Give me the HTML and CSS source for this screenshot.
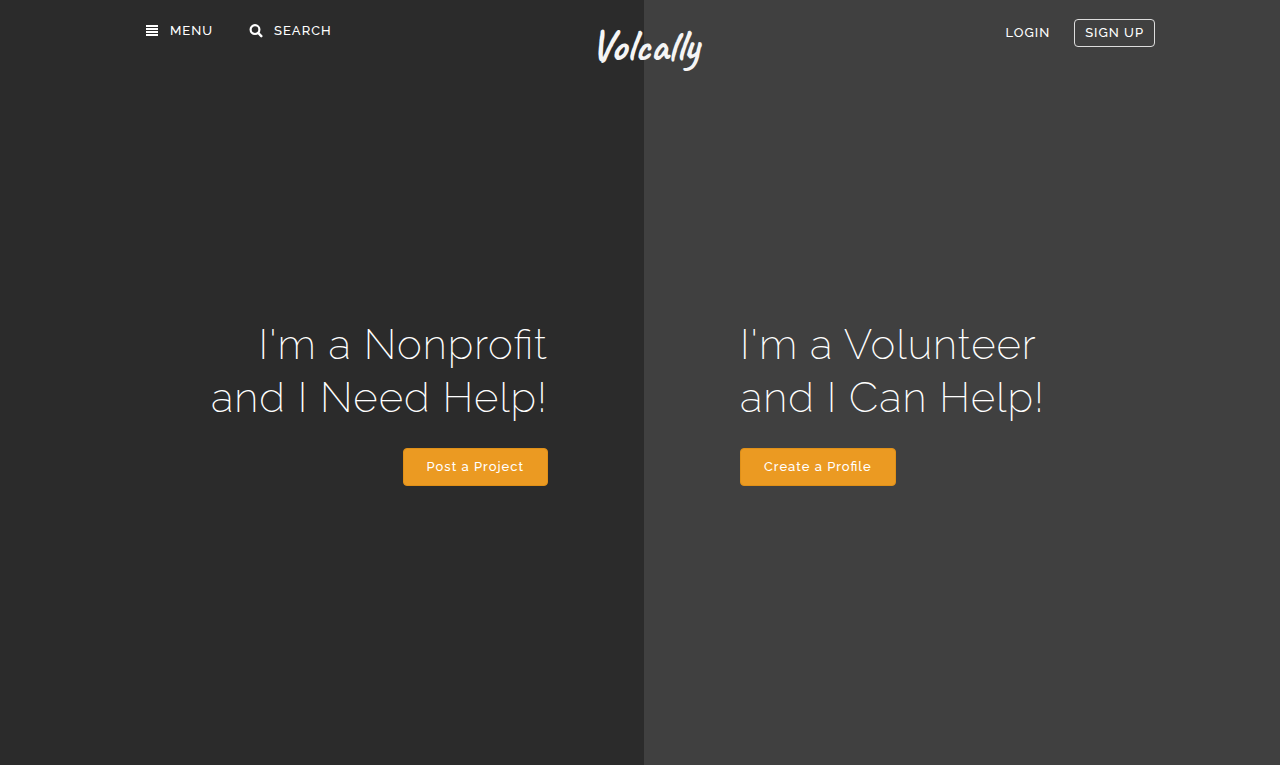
FILE: index.html
```html
<!DOCTYPE html>
<html lang="en">
<head>
<meta charset="utf-8">
<meta name="viewport" content="width=device-width, initial-scale=1">
<title>Volcally</title>
<link rel="stylesheet" href="styles.css">
</head>
<body class="page">
<header class="header">
  <nav class="tools" aria-label="Main">
    <button class="tool" type="button">
      <svg class="icon" viewBox="0 0 14 14" aria-hidden="true"><path d="M1 1h12v2H1zM1 4h12v2H1zM1 7h12v2H1zM1 10h12v2H1z"/></svg>
      MENU
    </button>
    <button class="tool" type="button">
      <svg class="icon" viewBox="0 0 14 14" aria-hidden="true"><circle class="lens" cx="6" cy="5.6" r="4.4"/><path class="handle" d="M9.3 9l3 3.1"/></svg>
      SEARCH
    </button>
  </nav>
  <a class="logo" href="#">Volcally</a>
  <nav class="account" aria-label="Account">
    <a class="login" href="#">LOGIN</a>
    <a class="signup" href="#">SIGN UP</a>
  </nav>
</header>
<main class="split">
  <section class="panel panel-nonprofit">
    <h1 class="title">I'm a Nonprofit<br>and I Need Help!</h1>
    <button class="action" type="button">Post a Project</button>
  </section>
  <section class="panel panel-volunteer">
    <h1 class="title">I'm a Volunteer<br>and I Can Help!</h1>
    <button class="action" type="button">Create a Profile</button>
  </section>
</main>
</body>
</html>
```
FILE: styles.css
```css
* { box-sizing: border-box; }

.page {
  margin: 0;
  min-height: 100vh;
  display: grid;
  color: #fff;
  background: #2b2b2b;
  font-family: Raleway, Lato, "Open Sans", sans-serif;
  font-size: 13px;
  font-feature-settings: "liga" 1;
  letter-spacing: 1px;
}

.header, .split { grid-area: 1 / 1; }

.header {
  z-index: 1;
  align-self: start;
  display: grid;
  grid-template-columns: 1fr auto 1fr;
  align-items: start;
  padding: 19px 125px 0 134px;
}

.tools { display: flex; gap: 36px; padding: 2px 0 0 11px; }

.tool {
  display: flex;
  align-items: center;
  gap: 11px;
  padding: 0;
  border: 0;
  background: none;
  color: inherit;
  font: inherit;
  font-feature-settings: inherit;
  font-weight: 500;
  letter-spacing: inherit;
  line-height: 20px;
  cursor: pointer;
}

.icon { width: 14px; height: 14px; fill: currentColor; }
.lens { fill: none; stroke: currentColor; stroke-width: 2.2; }
.handle { stroke: currentColor; stroke-width: 2.5; stroke-linecap: round; }

.logo {
  color: #f5f5f5;
  font-family: Caveat, "Caveat Brush", "Kaushan Script", "DejaVu Sans Condensed", cursive;
  font-size: 44px;
  font-weight: 700;
  letter-spacing: 0;
  line-height: 54px;
  text-decoration: none;
}

.account { display: flex; justify-content: flex-end; gap: 24px; font-weight: 500; }
.login, .signup { color: inherit; text-decoration: none; }
.login { line-height: 28px; }
.signup {
  padding: 0 10px;
  border: 1px solid #ddd;
  border-radius: 4px;
  line-height: 26px;
}

.split { display: grid; grid-template-columns: 644fr 636fr; }

.panel {
  display: flex;
  flex-direction: column;
  justify-content: center;
  padding: 38px 96px 0;
}
.panel-nonprofit { align-items: flex-end; text-align: right; background: #2b2b2b; }
.panel-volunteer { align-items: flex-start; background: #404040; }

.title {
  margin: 0 0 24px;
  font-size: 42px;
  font-weight: 200;
  line-height: 53px;
}

.action {
  padding: 0 23px;
  border: 1px solid #e09018;
  border-radius: 4px;
  background: #eb9a22;
  color: #fff;
  font: inherit;
  font-feature-settings: inherit;
  font-weight: 500;
  letter-spacing: inherit;
  line-height: 36px;
  cursor: pointer;
}
```
